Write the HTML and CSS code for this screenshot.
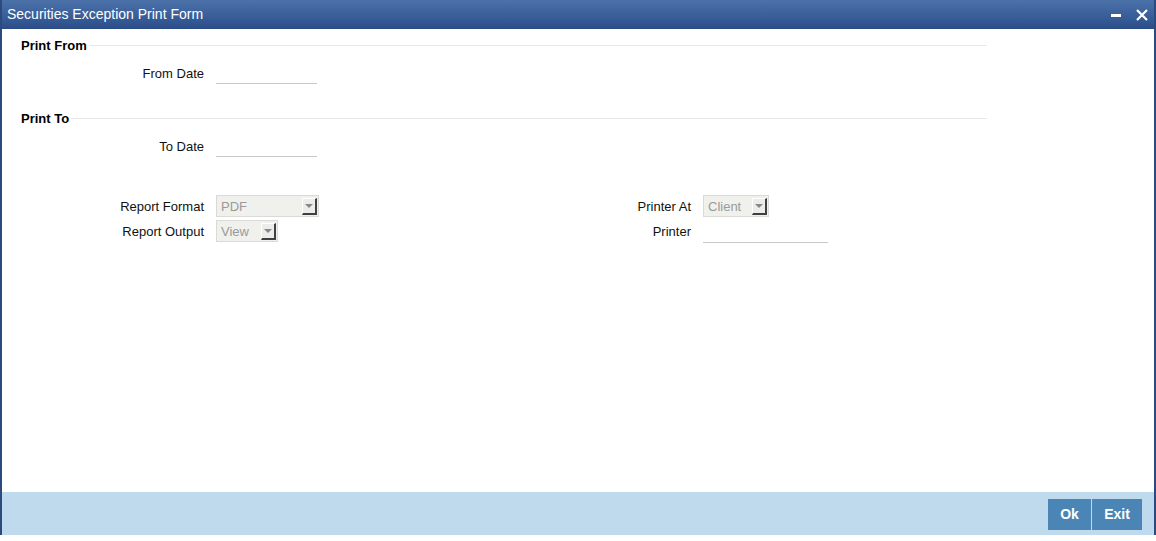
FILE: index.html
```html
<!DOCTYPE html>
<html>
<head>
<meta charset="utf-8">
<link rel="stylesheet" href="styles.css">
</head>
<body>
<div class="window">
  <div class="titlebar">
    <span class="title">Securities Exception Print Form</span>
    <div class="winbtns">
      <span class="minimize"></span>
      <svg class="close" width="12" height="12" viewBox="0 0 12 12"><path d="M1 1 L11 11 M11 1 L1 11" stroke="#fff" stroke-width="2.2"/></svg>
    </div>
  </div>
  <div class="content">
    <div class="section">
      <div class="legend"><span>Print From</span><span class="rule"></span></div>
      <div class="row"><label class="lbl">From Date</label><span class="field w101"></span></div>
    </div>
    <div class="section second">
      <div class="legend"><span>Print To</span><span class="rule"></span></div>
      <div class="row"><label class="lbl">To Date</label><span class="field w101"></span></div>
    </div>
    <div class="opts">
      <div class="col">
        <div class="row2"><label class="lbl">Report Format</label><span class="select w103"><span class="val">PDF</span><span class="arrow"></span></span></div>
        <div class="row2"><label class="lbl">Report Output</label><span class="select w62"><span class="val">View</span><span class="arrow"></span></span></div>
      </div>
      <div class="col right">
        <div class="row2"><label class="lbl">Printer At</label><span class="select w66"><span class="val">Client</span><span class="arrow"></span></span></div>
        <div class="row2"><label class="lbl">Printer</label><span class="field w125"></span></div>
      </div>
    </div>
  </div>
  <div class="footer">
    <button class="btn">Ok</button><button class="btn exit">Exit</button>
  </div>
</div>
</body>
</html>
```

FILE: styles.css
```css
html, body { margin: 0; padding: 0; background: #fff; }
body { font-family: "Liberation Sans", Arial, sans-serif; font-size: 13px; color: #000; }
.window {
  width: 1156px; height: 535px; box-sizing: border-box;
  border-left: 2px solid #2b4a7e; border-right: 2px solid #2b4a7e;
  display: flex; flex-direction: column;
}
.titlebar {
  height: 28px; flex: none;
  background: linear-gradient(#4c72aa, #2c4f8b);
  display: flex; align-items: center; justify-content: space-between;
  padding: 0 6px 0 5px; border-bottom: 1px solid #2a4a80;
}
.title { color: #fff; font-size: 14px; }
.winbtns { display: flex; align-items: center; gap: 15px; padding-top: 2px; }
.minimize { width: 10px; height: 3px; background: #fff; display: block; margin-top: 1px; }
.close { display: block; }
.content { flex: 1; position: relative; padding: 10px 0 0 19px; }
.legend { display: flex; align-items: center; font-weight: bold; height: 12px; width: 966px; }
.legend span:first-child { margin-right: 2px; }
.rule { flex: 1; height: 1px; background: #e8e8e8; }
.row { display: flex; align-items: center; margin-top: 11px; height: 23px; }
.lbl { width: 195px; text-align: right; padding-right: 12px; box-sizing: border-box; color: #111; }
.field { display: block; height: 23px; border-bottom: 1px solid #c8c8c8; box-sizing: border-box; align-self: flex-end; }
.row .field { height: 22px; margin-bottom: 1px; }
.w101 { width: 101px; }
.w125 { width: 125px; }
.section.second { margin-top: 27px; }
.opts { display: flex; margin-top: 37px; }
.col { width: 487px; }
.row2 { display: flex; align-items: center; height: 22px; margin-bottom: 3px; }
.select {
  display: flex; align-items: center; height: 22px; box-sizing: border-box;
  background: #f0f0ec; border: 1px solid #dadad6; color: #9a9a9a;
  padding-left: 4px; position: relative;
}
.select .val { flex: 1; }
.arrow {
  width: 15px; height: 17px; box-sizing: border-box; margin-right: 1px;
  border-top: 1px solid #fff; border-left: 1px solid #fff;
  border-right: 2px solid #404040; border-bottom: 2px solid #404040;
  background: #ececea; display: flex; align-items: center; justify-content: center;
}
.arrow::after { content: ""; border-left: 4px solid transparent; border-right: 4px solid transparent; border-top: 4px solid #888; margin-top: 1px; }
.w103 { width: 103px; }
.w62 { width: 62px; }
.w66 { width: 66px; }
.row2 .field { height: 19px; margin-bottom: -1px; }
.footer {
  height: 43px; flex: none; background: #bfdaec;
  display: flex; justify-content: flex-end; align-items: center; padding-right: 12px;
}
.btn {
  font-family: "Liberation Sans", Arial, sans-serif; font-weight: bold; font-size: 14px;
  color: #fff; background: #4a85b5; border: none; height: 31px; padding: 0;
  width: 43px; margin-left: 1px; margin-top: 1px;
}
.btn.exit { width: 50px; }
```
